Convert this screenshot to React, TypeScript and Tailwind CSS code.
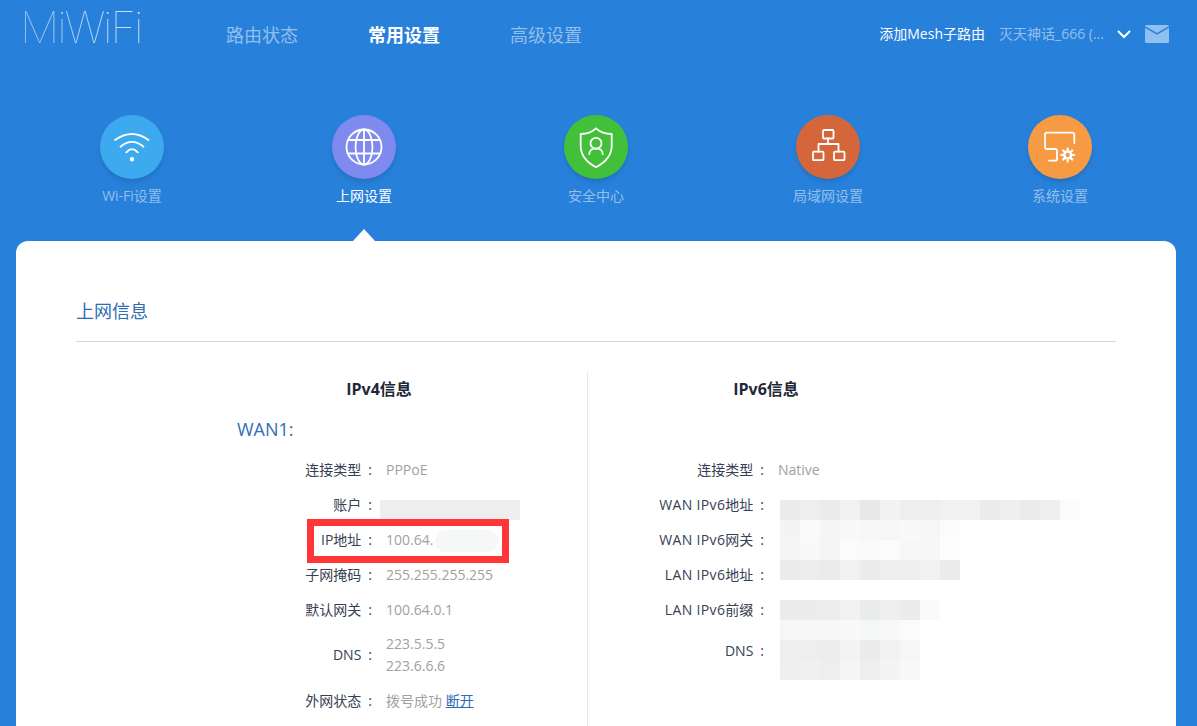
import { ReactNode } from 'react';

const font = { fontFamily: '"Open Sans", "Noto Sans CJK SC", sans-serif' };

const mosaic = [
  // y, colours per 20px cell starting at x=780
  { y: 0, cells: ['#ececec', '#eeeeee', '#ebebeb', '#f1f1f1', '#e6e8ea', '#f2f2f2', '#eeeeee', '#eeeeee', '#f1f1f1', '#f2f2f2', '#ececec', '#efefef', '#ebebeb', '#efefef', '#fafbfd'] },
  { y: 20, cells: ['#f4f4f4', '#fafafa', '#f5f5f5', '#f9f9f9', '#f6f6f6', '#f6f6f6', '#f9f9f9', '#f6f6f6', '#fcfcfc'] },
  { y: 40, cells: ['#f5f5f5', '#f9f9f9', '#f5f5f5', '#fbfbfb', '#fafafa', '#fbfbfb', '#f7f7f7', '#f7f7f7', '#fcfdfc'] },
  { y: 60, cells: ['#ececec', '#ededed', '#ebebeb', '#f1f1f1', '#ececec', '#eeeeee', '#efefef', '#f1f1f1', '#ebebeb'] },
  { y: 100, cells: ['#ececec', '#ececec', '#ededed', '#f1f1f1', '#eaecec', '#eef0f0', '#ececec', '#fafafa'] },
  { y: 120, cells: ['#f6f6f6', '#f7f7f7', '#f7f7f7', '#f9f9f7', '#f5f6f6', '#f8f8f8', '#fbfbfb'] },
  { y: 140, cells: ['#eeeeee', '#eeeeee', '#ededed', '#f3f3f3', '#ececec', '#f1f2f1', '#f6f6f6'] },
  { y: 160, cells: ['#efefef', '#f0f0f0', '#eeeeee', '#f5f5f3', '#eeeeee', '#f3f5f4', '#f8f8f8'] },
];

function Row({ label, width, children }: { label: ReactNode; width: string; children: ReactNode }) {
  return (
    <div className="flex h-[35px] items-center gap-3.5 text-sm">
      <div className={`${width} shrink-0 text-right text-gray-700`}>{label}&ensp;:</div>
      <div className="text-neutral-400">{children}</div>
    </div>
  );
}

function IconCircle({ color, label, active, children }: { color: string; label: string; active?: boolean; children: ReactNode }) {
  return (
    <div className="relative flex flex-col items-center">
      <div className={`flex h-16 w-16 items-center justify-center rounded-full shadow-md ${color}`}>
        <svg viewBox="0 0 64 64" className="h-16 w-16" fill="none" stroke="white" strokeWidth="1.8" strokeLinecap="round" strokeLinejoin="round">
          {children}
        </svg>
      </div>
      <div className={`mt-2 text-sm leading-[18px] ${active ? 'text-white' : 'text-white/50'}`}>{label}</div>
      {active && (
        <div className="absolute top-[114px] h-0 w-0 border-x-[11px] border-b-[12px] border-x-transparent border-b-white" />
      )}
    </div>
  );
}

export default function App() {
  return (
    <div className="h-screen overflow-hidden bg-[#2780da]" style={font}>
      <header className="flex h-[70px] items-start">
        <div className="ml-5 w-[206px] bg-gradient-to-r from-white/50 to-white bg-clip-text pt-0.5 pr-1 text-[44px] leading-[50px] font-thin tracking-tighter text-transparent" style={{ fontFamily: 'Inter, sans-serif' }}>
          MiWiFi
        </div>
        <nav className="mt-6 flex gap-[70px] text-lg leading-[22px]">
          <span className="text-white/50">路由状态</span>
          <span className="font-bold text-white">常用设置</span>
          <span className="text-white/50">高级设置</span>
        </nav>
        <div className="mt-6 ml-auto flex items-center pr-7 text-sm leading-5">
          <span className="text-white">添加Mesh子路由</span>
          <span className="ml-3.5 w-28 text-white/50">灭天神话_666 (...</span>
          <svg viewBox="0 0 14 10" className="ml-1.5 h-2.5 w-3.5" fill="none" stroke="white" strokeWidth="2">
            <path d="M1 2l6 6 6-6" />
          </svg>
          <svg viewBox="0 0 24 18" className="ml-3.5 h-[18px] w-6">
            <rect width="24" height="18" rx="1.500" fill="#8fc0f0" />
            <path d="M0 2l12 7 12-7" fill="none" stroke="#2780da" strokeWidth="1.500" />
          </svg>
        </div>
      </header>

      <div className="ml-4 grid w-290 grid-cols-5 pt-[45px] pb-9">
        <IconCircle color="bg-[#3daaf0]" label="Wi-Fi设置">
          <path d="M15 25Q32 13 48.500 25" />
          <path d="M20.500 31.700Q32 22 43.500 31.700" />
          <path d="M26.300 37.300Q32 31 37.800 37.300" />
          <circle cx="32" cy="44.300" r="1.300" fill="white" />
        </IconCircle>
        <IconCircle color="bg-[#7f8aee]" label="上网设置" active>
          <circle cx="32" cy="32" r="17.500" />
          <ellipse cx="32" cy="32" rx="8.500" ry="17.500" />
          <path d="M32 14.500V49.500M16.500 25H47.500M16.500 38.500H47.500" />
        </IconCircle>
        <IconCircle color="bg-[#43c03a]" label="安全中心">
          <path d="M32 13.300C28 17 22 19 16.700 19V31C16.700 41 24 48 32 52.300C40 48 47.700 41 47.700 31V19C42 19 36 17 32 13.300Z" />
          <circle cx="32" cy="28.300" r="5.500" />
          <path d="M25.300 39C25.300 31.500 38.700 31.500 38.700 39" />
        </IconCircle>
        <IconCircle color="bg-[#d5663b]" label="局域网设置">
          <rect x="27" y="15" width="10.500" height="8.500" rx="1" />
          <path d="M32 23.500V29M22.500 36.700V29H42.500V36.700" />
          <rect x="17" y="36.700" width="10.500" height="8.500" rx="1" />
          <rect x="38" y="36.700" width="10.500" height="8.500" rx="1" />
        </IconCircle>
        <IconCircle color="bg-[#f69a44]" label="系统设置">
          <path d="M46.300 28V19.700Q46.300 17.700 44.300 17.700H19Q17 17.700 17 19.700V32Q17 34 19 34H27Q29 34 29 36V43.700Q29 45.700 27 45.700H21" />
          <circle cx="39.700" cy="40" r="3.500" strokeWidth="2.500" />
          <path d="M39.700 33.500V35.500M39.700 44.500V46.500M33.200 40H35.200M44.200 40H46.200M35.200 35.500L36.500 36.800M42.900 43.200L44.200 44.500M44.200 35.500L42.900 36.800M36.500 43.200L35.200 44.500" strokeWidth="2.200" />
        </IconCircle>
      </div>

      <main className="ml-4 h-[600px] w-290 rounded-t-xl bg-white px-15 pt-15">
        <h2 className="border-b border-gray-300 pb-5 text-lg leading-5 text-[#2d6db5]">上网信息</h2>
        <div className="mt-[30px] flex">
          <section className="relative h-96 w-[512px] border-r border-gray-200 pt-2">
            <h3 className="ml-[125px] w-89 text-center text-base leading-[18px] font-bold text-gray-800">IPv4信息</h3>
            <div className="mt-[19px] ml-[161px] text-lg leading-6 text-[#2d6db5]">WAN1:</div>
            <div className="mt-[11px]">
              <Row label="连接类型" width="w-74">PPPoE</Row>
              <Row label="账户" width="w-74">&nbsp;</Row>
              <Row label="IP地址" width="w-74">100.64.</Row>
              <Row label="子网掩码" width="w-74">255.255.255.255</Row>
              <Row label="默认网关" width="w-74">100.64.0.1</Row>
              <div className="flex items-center gap-3.5 py-1.5 text-sm">
                <div className="w-74 shrink-0 text-right text-gray-700">DNS&ensp;:</div>
                <div className="leading-[22px] text-neutral-400">
                  <div>223.5.5.5</div>
                  <div>223.6.6.6</div>
                </div>
              </div>
              <Row label="外网状态" width="w-74">
                拨号成功 <span className="text-[#2d6db5] underline">断开</span>
              </Row>
            </div>
            {/* pixelated blur over the account and ip values */}
            <div className="absolute top-32 left-[304px] h-5 w-35 bg-[#eeeeee]" />
            <div className="absolute top-[158px] left-[359px] h-[22px] w-[63px] rounded-full bg-[#f6f7f7]" />
            {/* red highlight */}
            <div className="absolute top-[147px] left-[231px] h-11 w-[202px] border-7 border-[#ff3538]" />
          </section>
          <section className="relative flex-1 pt-2">
            <h3 className="w-89 text-center text-base leading-[18px] font-bold text-gray-800">IPv6信息</h3>
            <div className="mt-[54px]">
              <Row label="连接类型" width="w-44">Native</Row>
              <Row label={<><span className="tracking-wide">WAN IPv6</span>地址</>} width="w-44">&nbsp;</Row>
              <Row label={<><span className="tracking-wide">WAN IPv6</span>网关</>} width="w-44">&nbsp;</Row>
              <Row label={<><span className="tracking-wide">LAN IPv6</span>地址</>} width="w-44">&nbsp;</Row>
              <Row label={<><span className="tracking-wide">LAN IPv6</span>前缀</>} width="w-44">&nbsp;</Row>
              <div className="flex h-12 items-center gap-3.5 text-sm">
                <div className="w-44 shrink-0 text-right text-gray-700">DNS&ensp;:</div>
              </div>
            </div>
            <svg className="absolute top-32 left-[192px] h-[180px] w-[300px]" viewBox="0 0 300 180">
              {mosaic.map((row) =>
                row.cells.map((c, i) => <rect key={`${row.y}-${i}`} x={i * 20} y={row.y} width="20" height="20" fill={c} />)
              )}
            </svg>
          </section>
        </div>
      </main>
    </div>
  );
}
